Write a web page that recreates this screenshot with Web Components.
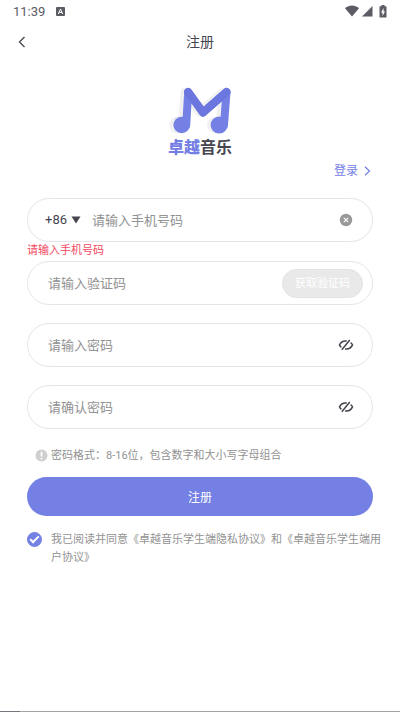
<!DOCTYPE html>
<html lang="zh-CN">
<head>
<meta charset="utf-8">
<meta name="viewport" content="width=device-width, initial-scale=1">
<title>注册</title>
<style>
html, body { margin: 0; min-height: 100%; }
body {
  --brand: #7480e4; --ink: #45454f; --muted: #929292; --line: #e6e6e6; --error: #f2495f;
  background: #fff; color: var(--ink);
  font-family: Roboto, "Noto Sans CJK SC", sans-serif; font-size: 13px;
}
</style>
</head>
<body>
<register-page></register-page>
<script>
const define = (name, html, setup) => {
  const template = document.createElement('template');
  template.innerHTML = html;
  customElements.define(name, class extends HTMLElement {
    constructor() {
      super();
      this.attachShadow({ mode: 'open' }).append(template.content.cloneNode(true));
    }
    connectedCallback() { if (setup) setup(this, this.shadowRoot); }
  });
};

define('status-bar', `
<style>
:host { display: flex; align-items: center; height: 24px; padding: 0 13px; color: #5c5c64; }
time { font-size: 13px; line-height: 24px; }
svg { display: block; fill: currentColor; }
.badge { margin-left: 11px; }
.right { display: flex; align-items: center; gap: 3px; margin-left: auto; margin-bottom: 2px; }
.badge { margin-bottom: 2px; }
.battery { margin-left: 3px; }
</style>
<time>11:39</time>
<svg class="badge" width="9" height="9" viewBox="0 0 9 9" aria-hidden="true"><rect width="9" height="9" rx="1"/><path d="M2.3 7 4.5 2 6.7 7M3.2 5.4H5.8" fill="none" stroke="#fff" stroke-width="1"/></svg>
<div class="right">
<svg width="14" height="12" viewBox="0 0 14 12" aria-hidden="true"><path d="M0 3.2C4-.4 10-.4 14 3.2L7 11.5Z"/></svg>
<svg width="11" height="12" viewBox="0 0 11 12" aria-hidden="true"><path d="M10.500 1V11.500H0Z"/></svg>
<svg class="battery" width="8" height="13" viewBox="0 0 8 13" aria-hidden="true"><path d="M2.500 0h3v1.300H7q.5 0 .5.500V12q0 .5-.5.500H1Q.5 12.500.5 12V1.800q0-.5.5-.5h1.500Z"/><path d="M4.600 3 2 7.400h1.500V11L6 6.400H4.600Z" fill="#fff"/></svg>
</div>`);

define('title-bar', `
<style>
:host { display: grid; grid-template-columns: 44px 1fr 44px; align-items: center; height: 36px; }
button { display: grid; place-items: center; height: 36px; border: 0; padding: 0; background: none; color: inherit; }
h1 { margin: 0; font-size: 14px; line-height: 20px; font-weight: 400; text-align: center; }
</style>
<button type="button" aria-label="返回"><svg width="8" height="12" viewBox="0 0 8 12" fill="none" stroke="currentColor" stroke-width="1.300"><path d="M6.500 1 1.500 6l5 5"/></svg></button>
<h1><slot></slot></h1>`);

define('brand-logo', `
<style>
:host { display: flex; flex-direction: column; align-items: center; }
svg { display: block; }
p { margin: 0; font-size: 16px; line-height: 24px; font-weight: 700; color: #45454f; }
b { color: var(--brand); }
</style>
<svg width="64" height="52" viewBox="0 0 64 52" aria-hidden="true">
<g fill="none" stroke-linecap="round" stroke-linejoin="round">
<g transform="translate(-4 0)" stroke="#f0f0f2" fill="#f0f0f2"><path d="M18 41 20.700 8 35 28 58.500 8 55.500 41" stroke-width="8" fill="none"/><circle cx="13.700" cy="41" r="8.500" stroke="none"/><circle cx="51.700" cy="41" r="8.500" stroke="none"/></g>
<path d="M18.200 41 20.200 8 35 28.500 58.500 8 56 41" stroke="#7480e4" stroke-width="8"/>
<path d="M20.200 8 35 28.500 58.500 8" stroke="#6b77df" stroke-width="8"/>
<circle cx="13.700" cy="41" r="8.300" fill="#7480e4"/><circle cx="51.200" cy="41" r="8.600" fill="#7480e4"/>
</g></svg>
<p><b>卓越</b>音乐</p>`);

define('login-link', `
<style>
:host { display: flex; justify-content: flex-end; }
a { display: flex; align-items: center; gap: 6px; color: var(--brand); font-size: 12px; line-height: 20px; text-decoration: none; }
</style>
<a href="#login"><slot></slot><svg width="7" height="10" viewBox="0 0 7 10" fill="none" stroke="currentColor" stroke-width="1.200" aria-hidden="true"><path d="M1 .700 5.500 5 1 9.300"/></svg></a>`);

define('form-field', `
<style>
:host { display: block; }
.box { display: flex; align-items: center; box-sizing: border-box; height: 44px; padding: 0 9px 0 20px; border: 1px solid var(--line); border-radius: 22px; }
:host([prefixed]) .box { padding-left: 17px; }
input { flex: 1; min-width: 0; height: 40px; box-sizing: border-box; border: 0; padding: 0; outline: 0; background: none; color: var(--ink); font: inherit; font-size: 13px; }
input::placeholder { color: var(--muted); opacity: 1; }
</style>
<div class="box"><slot name="before"></slot><input><slot name="after"></slot></div>`,
(host, root) => {
  const input = root.querySelector('input');
  input.type = host.getAttribute('type') || 'text';
  input.placeholder = host.getAttribute('label');
  input.setAttribute('aria-label', host.getAttribute('label'));
});

define('country-code', `
<style>
:host { display: block; margin-right: 11px; }
button { display: flex; align-items: center; gap: 4px; border: 0; padding: 0; background: none; color: inherit; font: inherit; font-size: 13px; line-height: 20px; }
</style>
<button type="button" aria-label="国家代码 +86">+86<svg width="10" height="8" viewBox="0 0 10 8" aria-hidden="true"><path d="M.5.500h9L5 7.500Z" fill="currentColor"/></svg></button>`);

define('clear-button', `
<style>
:host { display: block; margin-right: 10px; }
button { display: block; border: 0; padding: 0; background: none; }
svg { display: block; }
</style>
<button type="button" aria-label="清除"><svg width="14" height="14" viewBox="0 0 14 14"><circle cx="7" cy="7" r="6.200" fill="#999"/><path d="m4.800 4.800 4.400 4.400m0-4.400L4.800 9.200" stroke="#fff" stroke-width="1.100"/></svg></button>`);

define('reveal-button', `
<style>
:host { display: block; margin-right: 9px; }
button { display: block; border: 0; padding: 0; background: none; color: inherit; }
svg { display: block; }
</style>
<button type="button" aria-label="显示密码"><svg width="16" height="12" viewBox="0 0 16 12" fill="none" stroke="currentColor" stroke-width="1.500"><path d="M11.800 1 3.800 10.800M8.800 2C5.500 1.600 2.700 3.200 1.500 5.900c.4 1 1 1.800 1.900 2.400M12.600 3.600c.9.600 1.500 1.400 1.900 2.300-1.300 2.900-4.300 4.400-7.500 4"/></svg></button>`);

define('code-button', `
<style>
:host { display: block; }
button { display: block; box-sizing: border-box; height: 29px; border: 1px solid #e3e3e3; border-radius: 15px; padding: 1px 12px 0; background: #e9e9e9; color: #fff; font: inherit; font-size: 11px; line-height: 16px; }
</style>
<button type="button" disabled><slot></slot></button>`);

define('field-error', `
<style>
:host { display: block; height: 19px; font-size: 11px; line-height: 17px; color: var(--error); }
</style>
<slot></slot>`);

define('format-hint', `
<style>
:host { display: flex; align-items: center; gap: 3px; padding-left: 8px; color: var(--muted); font-size: 11px; line-height: 16px; }
svg { margin-bottom: 1px; }
</style>
<svg width="13" height="13" viewBox="0 0 13 13" aria-hidden="true"><circle cx="6.500" cy="6.500" r="6" fill="#cfcfcf"/><path d="M6.500 2.700v4.800M6.500 8.900v1.500" stroke="#fff" stroke-width="1.700"/></svg>
<span><slot></slot></span>`);

define('submit-button', `
<style>
:host { display: block; }
button { display: block; width: 100%; height: 39px; border: 0; border-radius: 20px; padding: 0; background: var(--brand); color: #fff; font: inherit; font-size: 12px; }
</style>
<button type="button"><slot></slot></button>`);

define('agreement-check', `
<style>
:host { display: block; margin-right: -9px; }
label { display: flex; gap: 9px; color: var(--muted); font-size: 11px; line-height: 18px; }
input { appearance: none; flex: none; width: 15px; height: 15px; margin: 1px 0 0; border: 1px solid var(--brand); border-radius: 50%; display: grid; place-items: center; }
input:checked { background: var(--brand); }
input:checked::before { content: ""; width: 7px; height: 3px; border: solid #fff; border-width: 0 0 2px 2px; transform: translateY(-1px) rotate(-45deg); }
</style>
<label><input type="checkbox" checked><span><slot></slot></span></label>`);

define('register-page', `
<style>
:host { display: flex; flex-direction: column; box-sizing: border-box; min-height: 100vh; }
main { flex: 1; padding: 24px 27px 0; }
login-link { margin: 1px 2px 17px 0; }
.fields { display: grid; gap: 18px; }
format-hint { margin: 19px 0 13px; }
agreement-check { margin-top: 15px; }
.edge { height: 1px; background: linear-gradient(90deg, #77777f 20px, #a3a3a3 20px); }
</style>
<status-bar></status-bar>
<title-bar>注册</title-bar>
<main>
<brand-logo></brand-logo>
<login-link>登录</login-link>
<form-field prefixed type="tel" label="请输入手机号码"><country-code slot="before"></country-code><clear-button slot="after"></clear-button></form-field>
<field-error>请输入手机号码</field-error>
<div class="fields">
<form-field label="请输入验证码"><code-button slot="after">获取验证码</code-button></form-field>
<form-field type="password" label="请输入密码"><reveal-button slot="after"></reveal-button></form-field>
<form-field type="password" label="请确认密码"><reveal-button slot="after"></reveal-button></form-field>
</div>
<format-hint>密码格式：8-16位，包含数字和大小写字母组合</format-hint>
<submit-button>注册</submit-button>
<agreement-check>我已阅读并同意《卓越音乐学生端隐私协议》和《卓越音乐学生端用户协议》</agreement-check>
</main>
<div class="edge"></div>`);
</script>
</body>
</html>
